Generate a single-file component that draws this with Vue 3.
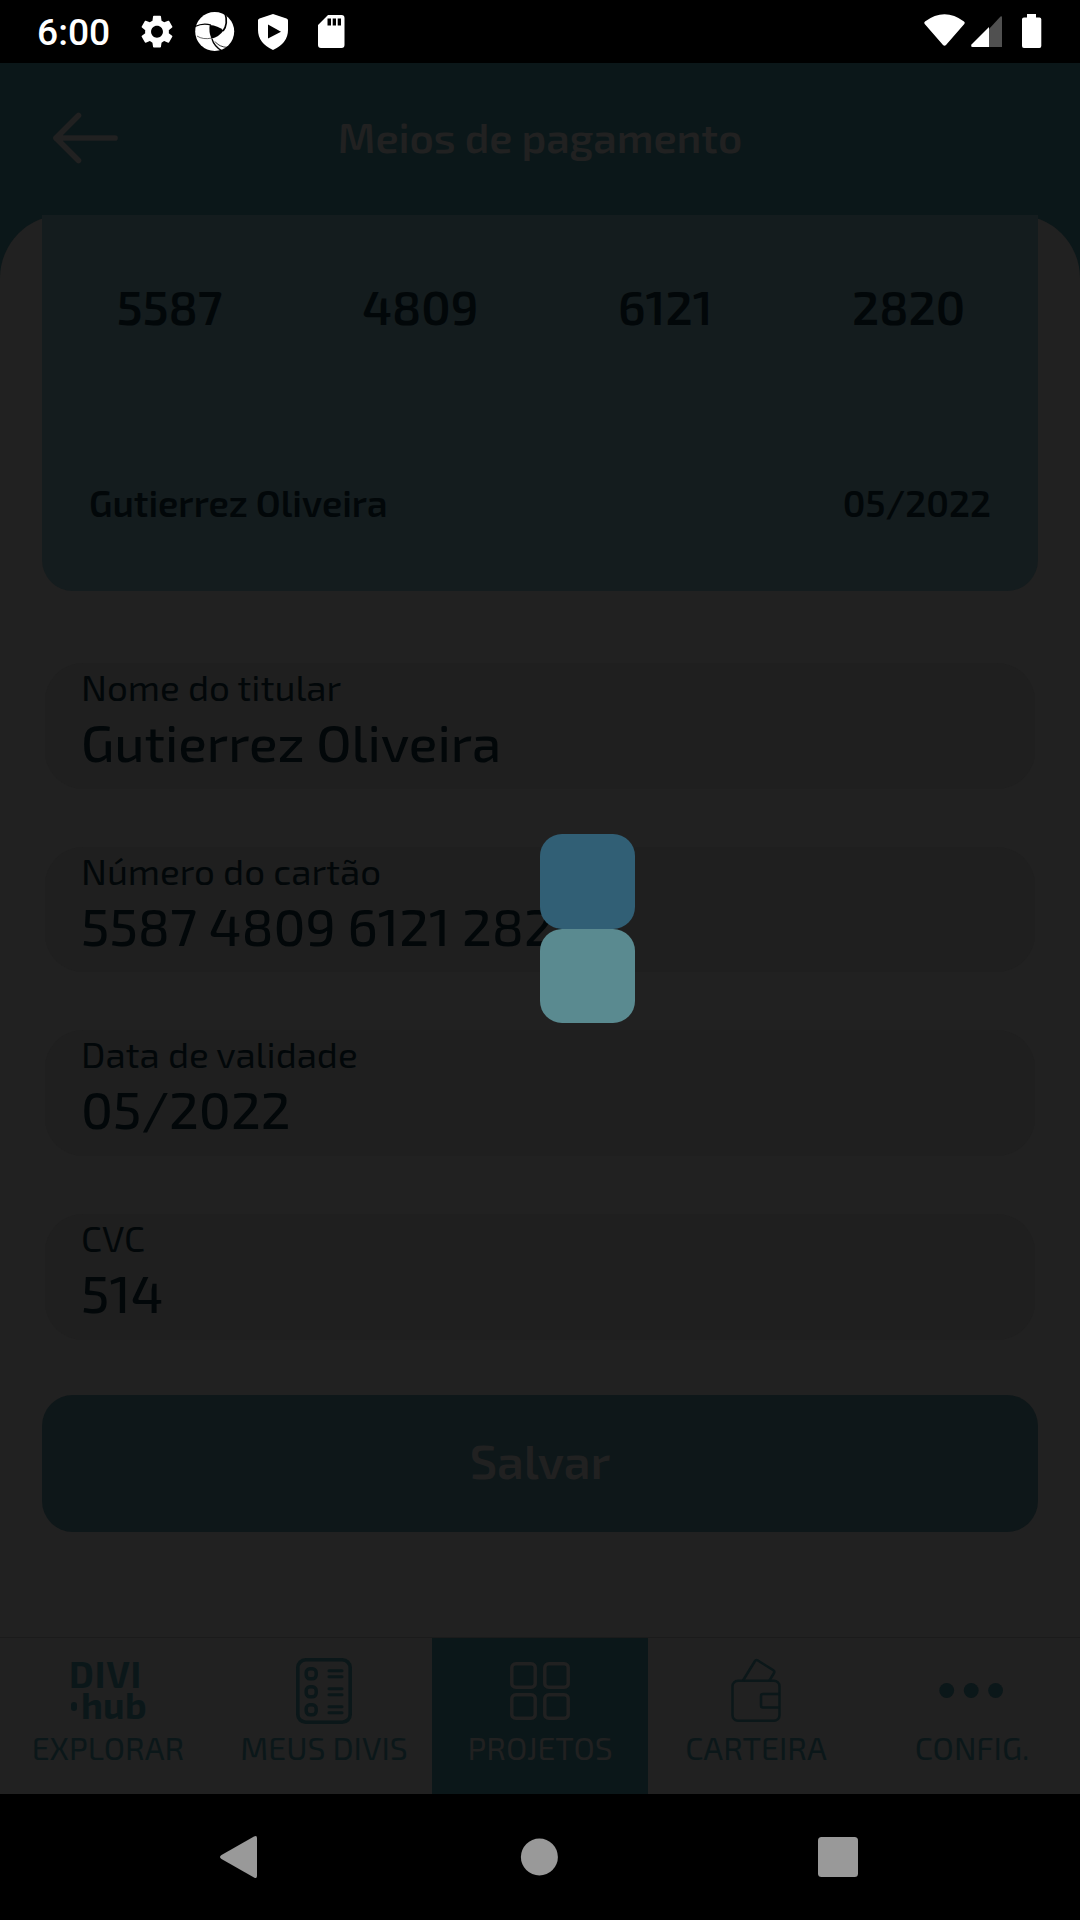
<script setup>
const cardGroups = ['5587', '4809', '6121', '2820']

const fields = [
  { label: 'Nome do titular', value: 'Gutierrez Oliveira' },
  { label: 'Número do cartão', value: '5587 4809 6121 2820' },
  { label: 'Data de validade', value: '05/2022' },
  { label: 'CVC', value: '514' },
]

const tabs = [
  { id: 'explore', label: 'EXPLORAR' },
  { id: 'divis', label: 'MEUS DIVIS' },
  { id: 'projects', label: 'PROJETOS', active: true },
  { id: 'wallet', label: 'CARTEIRA' },
  { id: 'config', label: 'CONFIG.' },
]
</script>

<template>
  <div class="screen">
    <div class="status">
      <span class="clock">6:00</span>
      <svg class="status-left" width="220" height="63" viewBox="135 0 220 63" fill="#fff">
        <path transform="translate(137.2 11.9) scale(1.65)" d="M19.14 12.94c.04-.3.06-.61.06-.94 0-.32-.02-.64-.07-.94l2.03-1.58a.49.49 0 0 0 .12-.61l-1.92-3.32a.488.488 0 0 0-.59-.22l-2.39.96c-.5-.38-1.03-.7-1.62-.94l-.36-2.54a.484.484 0 0 0-.48-.41h-3.84c-.24 0-.43.17-.47.41l-.36 2.54c-.59.24-1.13.57-1.62.94l-2.39-.96c-.22-.08-.47 0-.59.22L2.74 8.87c-.12.21-.08.47.12.61l2.03 1.58c-.05.3-.09.63-.09.94s.02.64.07.94l-2.03 1.58a.49.49 0 0 0-.12.61l1.92 3.32c.12.22.37.29.59.22l2.39-.96c.5.38 1.03.7 1.62.94l.36 2.54c.05.24.24.41.48.41h3.84c.24 0 .44-.17.47-.41l.36-2.54c.59-.24 1.13-.56 1.62-.94l2.39.96c.22.08.47 0 .59-.22l1.92-3.32c.12-.22.07-.47-.12-.61l-2.01-1.58zM12 15.6c-1.98 0-3.6-1.62-3.6-3.6s1.62-3.6 3.6-3.6 3.6 1.62 3.6 3.6-1.62 3.6-3.6 3.6z" />
        <circle cx="214.7" cy="31.5" r="19.5" />
        <path d="M209.7 25Q218 25.5 223.5 30.5Q219 37 211.5 38.8Q208.500 32 209.700 25Z" fill="#000" />
        <g fill="none" stroke="#000" stroke-width="1.3">
          <path d="M195 26.500Q203 22.500 211 25" />
          <path d="M223 31Q228.500 24 225 13" stroke-width="1.700" />
          <path d="M212 39Q214 46 222 51" />
          <path d="M212 38Q203 40 197 36" stroke-width=".6" />
          <path d="M215 41.500Q219 47 228 47.500" stroke-width=".8" />
        </g>
        <path fill-rule="evenodd" d="M273 14L286.500 18.500Q288 19 288 20.500V30Q288 43 273 50Q258 43 258 30V20.500Q258 19 259.500 18.500ZM268 24.500V38.500L281 31.700Z" />
        <path fill-rule="evenodd" d="M328 15H341.500Q344.500 15 344.500 18V45Q344.500 48 341.500 48H321Q318 48 318 45V25ZM327.500 18.500V25.500H331V18.500ZM332.700 18.500V25.500H336V18.500ZM337.700 18.500V25.500H341V18.500Z" />
      </svg>
      <svg class="status-right" width="130" height="63" viewBox="920 0 130 63" fill="#fff">
        <path d="M925 21.500Q944.500 7 964 21.500Q965.500 22.500 964.300 24L946 45Q944.500 46.500 943 45L924.700 24Q923.500 22.500 925 21.500Z" />
        <path d="M989 29L1000.500 16.500Q1002 15.500 1002 17.500V47H989Z" fill="#505050" />
        <path d="M989 27V47H972.500Q970.500 47 971.500 44.500Z" />
        <path d="M1027 14H1036V17.500H1039.500Q1041.300 17.500 1041.300 19.300V46Q1041.300 48 1039.500 48H1024Q1022 48 1022 46V19.300Q1022 17.500 1024 17.500H1027Z" />
      </svg>
    </div>

    <header class="header">
      <svg class="back" width="66" height="52" viewBox="53 112 66 52" fill="none" stroke="#212121" stroke-width="5.700" stroke-linecap="round" stroke-linejoin="round">
        <path d="M115 138H56M78.500 115.500L56 138L78.500 160.500" />
      </svg>
      <h1 class="title">Meios de pagamento</h1>
    </header>

    <main class="sheet">
      <section class="card">
        <div class="digits">
          <span v-for="g in cardGroups" :key="g">{{ g }}</span>
        </div>
        <div class="holder">
          <span>Gutierrez Oliveira</span>
          <span>05/2022</span>
        </div>
      </section>

      <section class="form">
        <div v-for="f in fields" :key="f.label" class="field">
          <div class="label">{{ f.label }}</div>
          <div class="value">{{ f.value }}</div>
        </div>
      </section>

      <button class="save">Salvar</button>
    </main>

    <nav class="tabs">
      <div v-for="t in tabs" :key="t.id" class="tab" :class="{ active: t.active }">
        <div class="icon">
          <div v-if="t.id === 'explore'" class="logo">
            <div class="divi">DIVI</div>
            <div class="hub"><i></i>hub</div>
          </div>
          <svg v-else-if="t.id === 'divis'" width="56" height="66" viewBox="0 0 56 66" fill="none" stroke="currentColor" stroke-width="3">
            <rect x="1.800" y="1.800" width="52.400" height="62.400" rx="8" stroke-width="3.600" />
            <g v-for="y in [9, 27, 45]" :key="y">
              <rect x="10.200" :y="y + 1.800" width="10" height="10" rx="3.800" stroke-width="3.400" />
              <path :d="`M33 ${y + 3.700}H46M33 ${y + 9.800}H46`" stroke-linecap="round" />
            </g>
          </svg>
          <svg v-else-if="t.id === 'projects'" width="60" height="66" viewBox="0 0 60 66" fill="none" stroke="currentColor" stroke-width="3.500">
            <rect x="1.800" y="5.800" width="23.400" height="23.400" rx="3.800" />
            <rect x="34.800" y="5.800" width="23.400" height="23.400" rx="3.800" />
            <rect x="1.800" y="36.800" width="23.400" height="23.400" rx="3.800" />
            <rect x="34.800" y="36.800" width="23.400" height="23.400" rx="3.800" />
          </svg>
          <svg v-else-if="t.id === 'wallet'" width="50" height="66" viewBox="0 0 50 66" fill="none" stroke="currentColor" stroke-width="2.500" stroke-linejoin="round">
            <rect x="1.500" y="22.800" width="47" height="40" rx="5.500" />
            <path d="M48.500 36H32Q30 36 30 38V47.500Q30 49.500 32 49.500H48.500M12 22.500L24 3Q25 1.500 26.500 2.300L42 12Q44 13.200 43 15L38.500 22.500" />
          </svg>
          <svg v-else width="66" height="66" viewBox="0 0 66 66" fill="currentColor">
            <circle cx="7.700" cy="32.500" r="7.400" />
            <circle cx="32.200" cy="32.500" r="7.400" />
            <circle cx="56.600" cy="32.500" r="7.400" />
          </svg>
        </div>
        <div class="tab-label">{{ t.label }}</div>
      </div>
    </nav>

    <div class="system-nav">
      <svg width="42" height="44" viewBox="0 0 42 44" fill="#999"><path d="M36 1.500Q39 0 39 3V41Q39 44 36 42.500L3.500 24Q.5 22 3.500 20Z" /></svg>
      <svg width="38" height="38" viewBox="0 0 38 38" fill="#999"><circle cx="19.400" cy="19" r="18.500" /></svg>
      <svg width="40" height="40" viewBox="0 0 40 40" fill="#999"><rect width="40" height="40" rx="3.500" /></svg>
    </div>

    <div class="loader"><i></i><i></i></div>
  </div>
</template>

<style>
body { margin: 0; background: #000; }
</style>

<style scoped>
.screen {
  position: relative;
  display: flex;
  flex-direction: column;
  width: 1080px;
  height: 1920px;
  overflow: hidden;
  background: #0b1719;
  font-family: "Exo 2", Roboto, "Liberation Sans", sans-serif;
  color: #020709;
  white-space: nowrap;
}
.status {
  display: flex;
  height: 63px;
  background: #000;
  color: #fff;
}
.clock {
  width: 98px;
  margin-left: 37px;
  font: 500 37.2px/65px Roboto, sans-serif;
}
.status-left { flex: none; }
.status-right { margin-left: auto; margin-right: 30px; flex: none; }
.header {
  display: flex;
  align-items: center;
  height: 150px;
  padding-bottom: 2px;
}
.back { margin-left: 53px; flex: none; }
.title {
  flex: 1;
  margin: 0 119px 5px 0;
  text-align: center;
  font-size: 41.8px;
  font-weight: 600;
  line-height: 60px;
  color: #212121;
}
.sheet {
  height: 1422px;
  flex: none;
  box-sizing: border-box;
  padding: 0 42px;
  border-radius: 63px 63px 0 0;
  background: #212121;
}
.card {
  display: flex;
  flex-direction: column;
  height: 376px;
  box-sizing: border-box;
  padding-top: 62px;
  border-radius: 0 0 31px 31px;
  background: #141c1e;
}
.digits {
  display: flex;
  justify-content: space-around;
  padding: 0 3px 0 5px;
  font-size: 47.5px;
  font-weight: 600;
  line-height: 60px;
}
.holder {
  display: flex;
  justify-content: space-between;
  margin-top: 135px;
  padding: 0 47px;
  font-size: 36.7px;
  font-weight: 600;
  line-height: 60px;
}
.form {
  display: flex;
  flex-direction: column;
  gap: 58px;
  margin: 72px 3px 0;
}
.field {
  height: 125.700px;
  padding-left: 36px;
  border-radius: 38px;
  background: #1f1f1f;
}
.label { font-size: 36.75px; line-height: 47px; }
.value { font-size: 52.700px; line-height: 62px; font-weight: 500; }
.save {
  display: block;
  width: 100%;
  height: 137px;
  margin-top: 55px;
  padding: 0 0 7px;
  border: 0;
  border-radius: 31px;
  background: #0e1719;
  color: #212121;
  font: 600 47.7px/130px "Exo 2", Roboto, sans-serif;
}
.tabs {
  display: flex;
  height: 156px;
  flex: none;
  border-top: 1px solid #1b1b1b;
  background: #212121;
}
.tab {
  box-sizing: border-box;
  width: 216px;
  height: 156px;
  padding-top: 20px;
  text-align: center;
  color: #0b1719;
}
.tab.active { background: #0b1719; color: #212121; }
.icon {
  display: flex;
  align-items: center;
  justify-content: center;
  height: 66px;
}
.tab-label { margin-top: 5px; font-size: 31.9px; line-height: 37px; }
.logo {
  width: 78px;
  margin-bottom: 4px;
  text-align: left;
  font-size: 36.3px;
  font-weight: 700;
  line-height: 31.500px;
}
.divi { letter-spacing: 1px; }
.hub { display: flex; align-items: center; letter-spacing: .4px; }
.hub i { width: 9px; height: 9px; margin: 4px 3.500px 0 2px; border-radius: 3px; background: currentColor; }
.system-nav {
  display: flex;
  align-items: center;
  justify-content: space-between;
  height: 126px;
  padding: 0 222px 0 218px;
  background: #000;
}
.loader {
  position: absolute;
  left: 540px;
  top: 834px;
  display: flex;
  flex-direction: column;
}
.loader i {
  width: 95px;
  height: 94.700px;
  border-radius: 22px;
  background: #315f75;
}
.loader i + i { background: #5a8a90; }
</style>
